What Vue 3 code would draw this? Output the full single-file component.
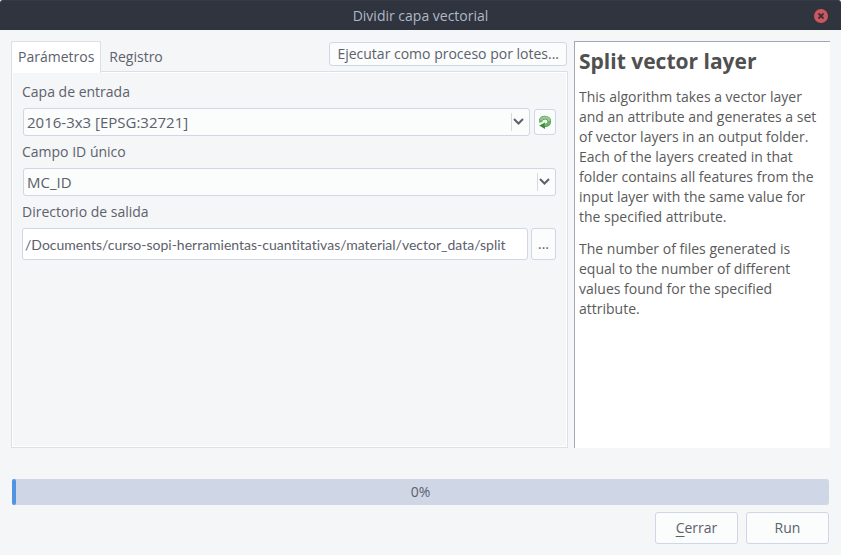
<script setup>
import { ref } from 'vue'

const tab = ref('params')
const layer = ref('2016-3x3 [EPSG:32721]')
const field = ref('MC_ID')
const folder = ref('/Documents/curso-sopi-herramientas-cuantitativas/material/vector_data/split')
const progress = ref(0)
</script>

<template>
  <div class="window">
    <header class="titlebar">
      <span class="title">Dividir capa vectorial</span>
      <button class="close" type="button" aria-label="Cerrar ventana">
        <svg viewBox="0 0 14 14" width="14" height="14">
          <circle cx="7" cy="7" r="7" fill="#d0565d" />
          <path d="M4.5 4.5l5 5M9.5 4.5l-5 5" stroke="#2f343f" stroke-width="1.8" fill="none" />
        </svg>
      </button>
    </header>

    <main class="content">
      <section class="left">
        <div class="tabs">
          <div class="tablist" role="tablist">
            <button type="button" role="tab" class="tab" :class="{ active: tab === 'params' }" :aria-selected="tab === 'params'" @click="tab = 'params'">Parámetros</button>
            <button type="button" role="tab" class="tab" :class="{ active: tab === 'log' }" :aria-selected="tab === 'log'" @click="tab = 'log'">Registro</button>
          </div>
          <button type="button" class="btn batch">Ejecutar como proceso por lotes...</button>
        </div>

        <div class="pane">
          <form v-show="tab === 'params'" class="form" @submit.prevent>
            <label for="layer">Capa de entrada</label>
            <div class="row">
              <div class="combo">
                <select id="layer" v-model="layer">
                  <option>2016-3x3 [EPSG:32721]</option>
                </select>
                <svg class="chevron" viewBox="0 0 11 7" width="11" height="7"><path d="M1 1l4.500 4.500L10 1" /></svg>
              </div>
              <button type="button" class="btn iterate" aria-label="Iterar sobre esta capa">
                <svg viewBox="0 0 14 15" width="14" height="15">
                  <path d="M2.600 5.600C3.200 3.600 4.900 2.600 7 2.600c2.600 0 4.300 1.600 4.300 3.900 0 2.500-1.800 4-4.800 4" fill="none" stroke="#4f9b4a" stroke-width="3.600" />
                  <path d="M7 7.600V14L1.200 10.600z" fill="#3f8d3b" />
                  <path d="M2.900 5.300C3.500 3.500 5 2.500 7 2.500c2.500 0 4.200 1.600 4.200 3.900" fill="none" stroke="#93cb8e" stroke-width="2.400" />
                  <path d="M11.200 6.400c0 2.400-1.800 3.800-4.700 3.800" fill="none" stroke="#6db568" stroke-width="2.200" />
                  <path d="M1 4.800v3l3-.6.8-1.400z" fill="#6db568" />
                </svg>
              </button>
            </div>

            <label for="field">Campo ID único</label>
            <div class="row">
              <div class="combo">
                <select id="field" v-model="field">
                  <option>MC_ID</option>
                </select>
                <svg class="chevron" viewBox="0 0 11 7" width="11" height="7"><path d="M1 1l4.500 4.500L10 1" /></svg>
              </div>
            </div>

            <label for="folder">Directorio de salida</label>
            <div class="row path">
              <input id="folder" v-model="folder" type="text" />
              <button type="button" class="btn browse">...</button>
            </div>
          </form>
        </div>
      </section>

      <aside class="help">
        <h2>Split vector layer</h2>
        <p>This algorithm takes a vector layer and an attribute and generates a set of vector layers in an output folder. Each of the layers created in that folder contains all features from the input layer with the same value for the specified attribute.</p>
        <p>The number of files generated is equal to the number of different values found for the specified attribute.</p>
      </aside>
    </main>

    <footer class="footer">
      <div class="progress" role="progressbar" aria-label="Progreso" aria-valuemin="0" aria-valuemax="100" :aria-valuenow="progress">
        <div class="bar" :style="{ width: progress + '%' }"></div>
        <span class="percent">{{ progress }}%</span>
      </div>
      <div class="actions">
        <button type="button" class="btn action"><span><u>C</u>errar</span></button>
        <button type="button" class="btn action">Run</button>
      </div>
    </footer>
  </div>
</template>

<style>
body {
  margin: 0;
  background: #f5f6f8;
}
</style>

<style scoped>
* {
  box-sizing: border-box;
}
.window {
  display: flex;
  flex-direction: column;
  min-height: 100vh;
  background: #f5f6f8;
  color: #5c616c;
  font: 14px/20px "Open Sans", "Noto Sans", sans-serif;
}
button,
select,
input {
  font: inherit;
  color: inherit;
  margin: 0;
}
.titlebar {
  display: grid;
  grid-template-columns: 1fr auto 1fr;
  align-items: center;
  height: 30px;
  padding: 0 13px;
  background: #2f343f;
  border-top: 1px solid #353a48;
  border-radius: 3px 3px 0 0;
  color: #afb8c6;
}
.title {
  grid-column: 2;
}
.close {
  justify-self: end;
  display: flex;
  padding: 0;
  border: 0;
  background: none;
}
.content {
  flex: 1;
  display: grid;
  grid-template-columns: minmax(0, 1fr) 256px;
  gap: 6px;
  padding: 11px 11px 0;
}
.left {
  display: flex;
  flex-direction: column;
}
.tabs {
  display: flex;
  justify-content: space-between;
  height: 30px;
}
.tablist {
  display: flex;
}
.tab {
  height: 30px;
  padding: 2px 8px 0;
  border: 0;
  background: none;
}
.tab.active {
  position: relative;
  z-index: 1;
  height: 32px;
  padding: 0 6px 2px;
  border: 1px solid #dcdfe6;
  border-bottom: 0;
  background: #fff;
}
.btn {
  display: flex;
  align-items: center;
  justify-content: center;
  padding: 0;
  border: 1px solid #cfd6e6;
  border-radius: 3px;
  background: #fbfcfc;
}
.batch {
  height: 24px;
  margin: 1px 1px 0 0;
  padding: 0 7px;
}
.pane {
  flex: 1;
  padding: 9px 10px 9px 9px;
  border: 1px solid #dcdfe3;
  outline: 1px solid #fff;
  outline-offset: -2px;
}
.form {
  display: flex;
  flex-direction: column;
  gap: 6px;
  padding: 1px;
}
.row {
  display: flex;
  align-items: center;
  gap: 4px;
  padding-left: 1px;
}
.row.path {
  gap: 3px;
  padding-left: 0;
}
.combo {
  position: relative;
  flex: 1;
  height: 28px;
}
.combo select {
  appearance: none;
  width: 100%;
  height: 28px;
  padding: 0 26px 0 3px;
  border: 1px solid #cfd6e6;
  border-radius: 3px;
  background: #fbfcfc;
  font-size: 15px;
}
.combo::after {
  content: "";
  position: absolute;
  top: 5px;
  bottom: 5px;
  right: 18px;
  width: 1px;
  background: #d6d9df;
}
.chevron {
  position: absolute;
  right: 6px;
  top: 10px;
  fill: none;
  stroke: #5c616c;
  stroke-width: 2;
  pointer-events: none;
}
.iterate {
  width: 22px;
  height: 26px;
}
.path input {
  flex: 1;
  min-width: 0;
  height: 32px;
  padding: 0 2px;
  border: 1px solid #cfd6e6;
  border-radius: 3px;
  background: #fff;
  font-family: Lato, "Open Sans", sans-serif;
  font-variant-ligatures: none;
}
.browse {
  width: 25px;
  height: 32px;
}
.help {
  padding: 4px;
  border: 1px solid #a1a7b2;
  border-right: 0;
  border-bottom: 0;
  background: #fff;
  color: #5a5a5a;
}
.help h2 {
  margin: 0 0 11px;
  color: #505050;
  font-size: 21px;
  line-height: 30px;
}
.help p {
  margin: 0 0 12px;
}
.footer {
  padding: 31px 12px 11px;
}
.progress {
  position: relative;
  display: flex;
  align-items: center;
  justify-content: center;
  height: 26px;
  border-radius: 3px;
  background: #cfd6e6;
}
.bar {
  position: absolute;
  left: 0;
  top: 0;
  bottom: 0;
  min-width: 4px;
  border-radius: 3px;
  background: #5294e2;
}
.percent {
  position: relative;
}
.actions {
  display: flex;
  justify-content: flex-end;
  gap: 8px;
  margin-top: 7px;
}
.action {
  width: 83px;
  height: 32px;
}
.action u {
  text-underline-offset: 3px;
}
</style>
